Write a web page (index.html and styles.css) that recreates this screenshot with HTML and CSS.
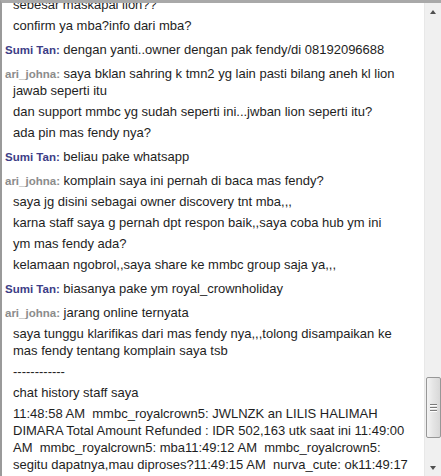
FILE: index.html
```html
<!DOCTYPE html>
<html>
<head>
<meta charset="utf-8">
<link rel="stylesheet" href="styles.css">
</head>
<body>
<div class="window">
  <div class="log">
    <div class="list">
      <div class="group">
        <p class="msg">sebesar maskapai lion??</p>
        <p class="msg">confirm ya mba?info dari mba?</p>
      </div>
      <div class="group">
        <p class="msg first"><span class="name sumi">Sumi Tan:</span> dengan yanti..owner dengan pak fendy/di 08192096688</p>
      </div>
      <div class="group">
        <p class="msg first"><span class="name ari">ari_johna:</span> saya bklan sahring k tmn2 yg lain pasti bilang aneh kl lion jawab seperti itu</p>
        <p class="msg">dan support mmbc yg sudah seperti ini...jwban lion seperti itu?</p>
        <p class="msg">ada pin mas fendy nya?</p>
      </div>
      <div class="group">
        <p class="msg first"><span class="name sumi">Sumi Tan:</span> beliau pake whatsapp</p>
      </div>
      <div class="group">
        <p class="msg first"><span class="name ari">ari_johna:</span> komplain saya ini pernah di baca mas fendy?</p>
        <p class="msg">saya jg disini sebagai owner discovery tnt mba,,,</p>
        <p class="msg">karna staff saya g pernah dpt respon baik,,saya coba hub ym ini</p>
        <p class="msg">ym mas fendy ada?</p>
        <p class="msg">kelamaan ngobrol,,saya share ke mmbc group saja ya,,,</p>
      </div>
      <div class="group">
        <p class="msg first"><span class="name sumi">Sumi Tan:</span> biasanya pake ym royal_crownholiday</p>
      </div>
      <div class="group">
        <p class="msg first"><span class="name ari">ari_johna:</span> jarang online ternyata</p>
        <p class="msg">saya tunggu klarifikas dari mas fendy nya,,,tolong disampaikan ke mas fendy tentang komplain saya tsb</p>
        <p class="msg">------------</p>
        <p class="msg">chat history staff saya</p>
        <p class="msg">11:48:58 AM&nbsp; mmbc_royalcrown5: JWLNZK an LILIS HALIMAH DIMARA Total Amount Refunded : IDR 502,163 utk saat ini 11:49:00 AM&nbsp; mmbc_royalcrown5: mba11:49:12 AM&nbsp; mmbc_royalcrown5: segitu dapatnya,mau diproses?11:49:15 AM&nbsp; nurva_cute: ok11:49:17 AM&nbsp; nurva_cute: proses11:49:20 AM&nbsp; mmbc_royalcrown5: XOHZEG an LILIS HALIMAH DIMARA Total Amount Refunded</p>
      </div>
    </div>
  </div>
  <div class="scrollbar">
    <div class="arrow up"></div>
    <div class="track">
      <div class="thumb"><span class="grip"></span><span class="grip"></span><span class="grip"></span></div>
    </div>
    <div class="arrow down"></div>
  </div>
</div>
</body>
</html>
```

FILE: styles.css
```css
html, body {
  margin: 0;
  padding: 0;
  background: #ffffff;
}

.window {
  width: 441px;
  height: 476px;
  box-sizing: border-box;
  border-top: 3px solid #a9a9a9;
  border-left: 2px solid #9a9a9a;
  display: flex;
  overflow: hidden;
}

.log {
  flex: 1;
  overflow: hidden;
  background: #ffffff;
  font-family: "Liberation Sans", Arial, sans-serif;
  font-size: 13px;
  color: #1e1e1e;
}

.list {
  margin-top: -7px;
}

.group {
  padding-top: 3px;
}

.group:first-child {
  padding-top: 0;
}

.msg {
  margin: 0 0 4px 0;
  line-height: 17px;
  padding: 0 7px 0 11px;
}

.msg.first {
  text-indent: -8px;
}

.name {
  font-family: "Liberation Sans", Tahoma, sans-serif;
  font-weight: bold;
  font-size: 11.5px;
  line-height: 12px;
}

.name.sumi {
  color: #3d3d86;
}

.name.ari {
  color: #8c8c8c;
}

.scrollbar {
  width: 17px;
  flex: none;
  background: #f0f0f0;
  border-left: 1px solid #e8e8e8;
  box-sizing: border-box;
  display: flex;
  flex-direction: column;
}

.arrow {
  height: 17px;
  flex: none;
  display: flex;
  align-items: center;
  justify-content: center;
}

.arrow::before {
  content: "";
  width: 0;
  height: 0;
  border-left: 3.5px solid transparent;
  border-right: 3.5px solid transparent;
}

.arrow.up::before {
  border-bottom: 4px solid #505050;
}

.arrow.down::before {
  border-top: 4px solid #505050;
}

.track {
  flex: 1;
  display: flex;
  flex-direction: column;
  justify-content: flex-end;
  padding-bottom: 21px;
}

.thumb {
  height: 61px;
  margin: 0 0 0 1px;
  box-sizing: border-box;
  border: 1px solid #979797;
  border-radius: 2px;
  background: linear-gradient(to right, #f3f3f3, #e4e4e4 50%, #d8d8d8);
  display: flex;
  flex-direction: column;
  align-items: center;
  justify-content: center;
  gap: 1px;
}

.grip {
  width: 7px;
  height: 1px;
  background: #7a7a7a;
  border-bottom: 1px solid #ffffff;
}
```
